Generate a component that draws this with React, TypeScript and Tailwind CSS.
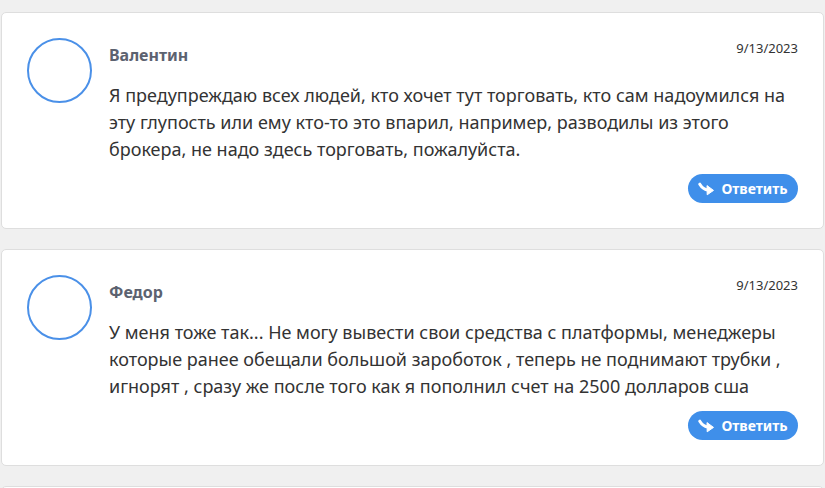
import React from "react";

type Comment = {
  name: string;
  date: string;
  text: string;
};

const comments: Comment[] = [
  {
    name: "Валентин",
    date: "9/13/2023",
    text: "Я предупреждаю всех людей, кто хочет тут торговать, кто сам надоумился на эту глупость или ему кто-то это впарил, например, разводилы из этого брокера, не надо здесь торговать, пожалуйста.",
  },
  {
    name: "Федор",
    date: "9/13/2023",
    text: "У меня тоже так... Не могу вывести свои средства с платформы, менеджеры которые ранее обещали большой зароботок , теперь не поднимают трубки , игнорят , сразу же после того как я пополнил счет на 2500 долларов сша",
  },
];

function ReplyIcon() {
  return (
    <svg width="17" height="14" viewBox="0 0 17 14" fill="none">
      <path d="M1.8 2.2 C3.5 5 6 7.6 10 8" stroke="white" strokeWidth="3" strokeLinecap="round" />
      <path d="M9 3.6 L15.5 8.4 L9.2 12.8 Z" fill="white" strokeLinejoin="round" stroke="white" strokeWidth="1" />
    </svg>
  );
}

function CommentCard({ c }: { c: Comment }) {
  return (
    <div className="flex rounded-[5px] border border-[#dedede] bg-white pl-[25px] pr-[25px] pt-[25px] pb-[25px]">
      <div className="h-[65px] w-[65px] shrink-0 rounded-full border-2 border-[#4a90e8]" />
      <div className="ml-[17px] flex-1">
        <div className="flex items-start justify-between">
          <div className="mt-[7px] text-[16px] font-bold leading-[20px] text-[#5c6270]">{c.name}</div>
          <div className="mt-[1px] text-[13px] leading-[18px] text-[#333]">{c.date}</div>
        </div>
        <p className="mt-[17px] max-w-[680px] text-[18px] leading-[27px] text-[#333]">{c.text}</p>
        <div className="mt-[11px] flex justify-end">
          <button className="flex h-[29px] w-[110px] items-center justify-center gap-[6px] rounded-full bg-[#3f8fea] text-[14px] font-bold text-white">
            <ReplyIcon />
            Ответить
          </button>
        </div>
      </div>
    </div>
  );
}

export default function App() {
  return (
    <div className="h-[488px] overflow-hidden bg-[#f0f0f0] pt-[12px] pr-[1px] pl-px" style={{ fontFamily: '"Noto Sans", "Open Sans", sans-serif' }}>
      <div className="flex flex-col gap-[20px]">
        {comments.map((c, i) => (
          <CommentCard key={i} c={c} />
        ))}
        <div className="h-[40px] rounded-[5px] border border-[#dedede] bg-white" />
      </div>
    </div>
  );
}
